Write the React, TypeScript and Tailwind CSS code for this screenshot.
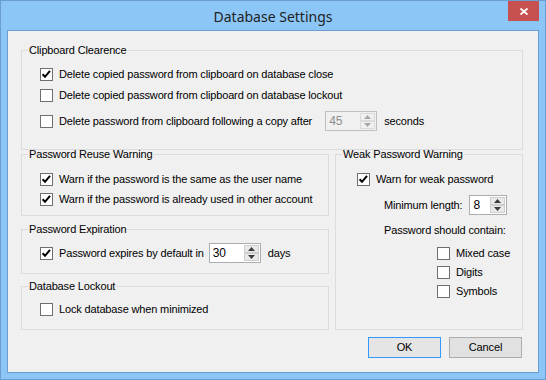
import type { ReactNode } from 'react'

function Check({ on }: { on?: boolean }) {
  return (
    <span className="flex h-[13px] w-[13px] shrink-0 items-center justify-center border border-[#6f6f6f] bg-white">
      {on && (
        <svg width="11" height="11" viewBox="0 0 11 11">
          <path d="M1.6 5.2 L4 7.8 L9 1.8" fill="none" stroke="#000" strokeWidth="2" />
        </svg>
      )}
    </span>
  )
}

function Row({ on, children, className = '' }: { on?: boolean; children: ReactNode; className?: string }) {
  return (
    <div className={`flex h-[16px] items-center ${className}`}>
      <Check on={on} />
      <span className="ml-[6px] whitespace-nowrap">{children}</span>
    </div>
  )
}

function Arrow({ up, disabled }: { up?: boolean; disabled?: boolean }) {
  return (
    <div className={`flex flex-1 items-center justify-center border ${disabled ? 'border-[#dadada] bg-[#f0f0f0]' : 'border-[#cfcfcf] bg-[#e9e9e9]'}`}>
      <svg width="7" height="4" viewBox="0 0 7 4">
        <path d={up ? 'M0 4 L3.5 0 L7 4 Z' : 'M0 0 L3.5 4 L7 0 Z'} fill={disabled ? '#a8a8a8' : '#3c3c3c'} />
      </svg>
    </div>
  )
}

function Spin({ value, disabled, className = '' }: { value: string; disabled?: boolean; className?: string }) {
  return (
    <div className={`flex h-[20px] shrink-0 border ${disabled ? 'border-[#bfbfbf] bg-[#f0f0f0] text-[#8c8c8c]' : 'border-[#abadb3] bg-white text-black'} ${className}`}>
      <span className="flex-1 pl-[3px] text-[12px] leading-[18px]">{value}</span>
      <div className="flex w-[16px] flex-col py-[1px] pr-[1px]">
        <Arrow up disabled={disabled} />
        <Arrow disabled={disabled} />
      </div>
    </div>
  )
}

// fieldset + legend gives the Win32 group box look; padding goes on the inner div
function Group({ title, className = '', inner = '', children }: { title: string; className?: string; inner?: string; children: ReactNode }) {
  return (
    <fieldset className={`border border-[#dcdcdc] ${className}`}>
      <legend className="ml-[6px] px-[1px] leading-[13px]">{title}</legend>
      <div className={inner}>{children}</div>
    </fieldset>
  )
}

export default function App() {
  return (
    <div className="flex h-[380px] w-[546px] flex-col border border-[#6c9dd2] bg-[#8cc6f6] font-['Liberation_Sans',Arial,sans-serif] text-[11px] tracking-[-0.15px] text-black">
      <div className="relative flex h-[29px] shrink-0 items-center justify-center">
        <span className="pt-[2px] font-['Noto_Sans',sans-serif] text-[14px] tracking-normal text-[#1f1f1f]">Database Settings</span>
        <div className="absolute right-[6px] top-0 flex h-[20px] w-[31px] items-center justify-center bg-[#c75050]">
          <svg width="8" height="7" viewBox="0 0 8 7">
            <path d="M0.5 0.5 L7.5 6.5 M7.5 0.5 L0.5 6.5" stroke="#fff" strokeWidth="1.8" />
          </svg>
        </div>
      </div>

      <div className="mx-[6px] flex h-[343px] shrink-0 flex-col border border-[#6c9dd2] bg-[#f0f0f0] pl-[13px] pr-[15px]">
        <Group title="Clipboard Clearence" className="mt-[13px] h-[106px]" inner="pl-[18px] pt-[9px]">
          <Row on>Delete copied password from clipboard on database close</Row>
          <Row className="mt-[5px]">Delete copied password from clipboard on database lockout</Row>
          <div className="mt-[8px] flex h-[20px] items-center">
            <Check />
            <span className="ml-[6px] whitespace-nowrap">Delete password from clipboard following a copy after</span>
            <Spin value="45" disabled className="ml-[13px] w-[52px]" />
            <span className="ml-[7px]">seconds</span>
          </div>
        </Group>

        <div className="mt-[-2px] flex gap-[6px]">
          <div className="flex w-[308px] flex-col">
            <Group title="Password Reuse Warning" className="h-[68px]" inner="pl-[18px] pt-[10px]">
              <Row on>Warn if the password is the same as the user name</Row>
              <Row on className="mt-[4px]">Warn if the password is already used in other account</Row>
            </Group>
            <Group title="Password Expiration" className="mt-[7px] h-[51px]" inner="pl-[18px] pt-[7px]">
              <div className="flex h-[20px] items-center">
                <Check on />
                <span className="ml-[6px] whitespace-nowrap">Password expires by default in</span>
                <Spin value="30" className="ml-[5px] w-[52px]" />
                <span className="ml-[7px]">days</span>
              </div>
            </Group>
            <Group title="Database Lockout" className="mt-[6px] h-[50px]" inner="pl-[18px] pt-[8px]">
              <Row>Lock database when minimized</Row>
            </Group>
          </div>

          <Group title="Weak Password Warning" className="h-[182px] flex-1" inner="pt-[10px]">
            <Row on className="pl-[21px]">Warn for weak password</Row>
            <div className="mt-[8px] flex h-[20px] items-center pl-[48px]">
              <span className="whitespace-nowrap">Minimum length:</span>
              <Spin value="8" className="ml-[7px] w-[38px]" />
            </div>
            <div className="mt-[7px] flex h-[16px] items-center pl-[48px]">Password should contain:</div>
            <Row className="mt-[7px] pl-[101px]">Mixed case</Row>
            <Row className="mt-[3px] pl-[101px]">Digits</Row>
            <Row className="mt-[3px] pl-[101px]">Symbols</Row>
          </Group>
        </div>

        <div className="mt-[7px] flex justify-end gap-[8px] pr-[1px]">
          <button className="h-[21px] w-[73px] border border-[#3399ff] bg-[#e5e5e5]">OK</button>
          <button className="h-[21px] w-[73px] border border-[#adadad] bg-[#e1e1e1]">Cancel</button>
        </div>
      </div>
    </div>
  )
}
